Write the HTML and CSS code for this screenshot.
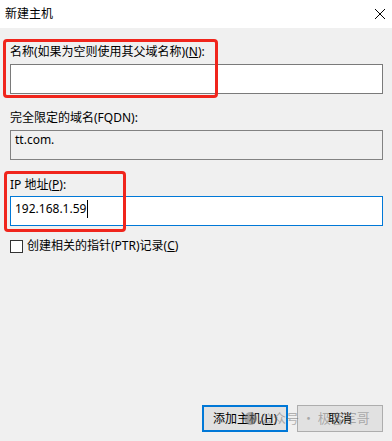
FILE: index.html
```html
<!DOCTYPE html>
<html lang="zh-CN">
	<head>
		<meta charset="UTF-8">
		<title>新建主机</title>
		<link rel="stylesheet" href="styles.css">
	</head>
	<body>

		<div class="titlebar">
			<span class="title">新建主机</span>
			<svg class="close" width="12" height="12" viewBox="0 0 12 12">
				<path d="M1 1 L11 11 M11 1 L1 11" stroke="#000" stroke-width="1" fill="none"/>
			</svg>
		</div>

		<div class="dialog">
			<label class="field-label first">名称(如果为空则使用其父域名称)(<u>N</u>):</label>
			<div class="textbox"></div>

			<label class="field-label fqdn">完全限定的域名(FQDN):</label>
			<div class="textbox readonly">tt.com.</div>

			<label class="field-label ip">IP 地址(<u>P</u>):</label>
			<div class="textbox focused">192.168.1.59<span class="caret"></span></div>

			<label class="check-row">
				<span class="checkbox"></span>
				<span>创建相关的指针(PTR)记录(<u>C</u>)</span>
			</label>

			<div class="buttons">
				<button class="btn default">添加主机(<u>H</u>)</button>
				<button class="btn">取消</button>
			</div>

			<!-- annotations drawn over the dialog -->
			<div class="mark mark-name"></div>
			<div class="mark mark-ip"></div>
			<div class="watermark"><span class="wm-logo"></span>公众号 · 极客军哥</div>
		</div>

	</body>
</html>
```

FILE: styles.css
```css
html,
body {
	margin: 0;
	padding: 0;
}
body {
	width: 392px;
	height: 441px;
	display: flex;
	flex-direction: column;
	font-family: "Noto Sans", "Noto Sans CJK SC", sans-serif;
	font-size: 12px;
	color: #000;
	background: #f0f0f0;
}

.titlebar {
	height: 28px;
	flex: none;
	display: flex;
	align-items: center;
	justify-content: space-between;
	padding: 0 6px 0 5px;
	background: #fff;
}
.title {
	line-height: 16px;
}
.close {
	display: block;
}

.dialog {
	flex: 1;
	position: relative;
	display: flex;
	flex-direction: column;
	padding: 0 9px 9px 10px;
}

.field-label {
	display: block;
	line-height: 16px;
}
.field-label.first {
	margin-top: 16px;
	margin-bottom: 4px;
}
.field-label.fqdn {
	margin-top: 16px;
	margin-bottom: 4px;
}
.field-label.ip {
	margin-top: 17px;
	margin-bottom: 3px;
}

.textbox {
	box-sizing: border-box;
	height: 30px;
	border: 1px solid #7a7a7a;
	background: #fff;
	padding: 2px 4px 0;
	line-height: 16px;
	white-space: nowrap;
}
.textbox.readonly {
	background: #f0f0f0;
	border-color: #828282;
	padding-top: 1px;
}
.textbox.focused {
	border-color: #0078d7;
	padding-top: 3px;
}
.caret {
	display: inline-block;
	width: 1px;
	height: 18px;
	margin-left: 1px;
	background: #000;
	vertical-align: -5px;
}

.check-row {
	display: flex;
	align-items: center;
	gap: 4px;
	margin-top: 12px;
	line-height: 16px;
}
.checkbox {
	box-sizing: border-box;
	width: 13px;
	height: 13px;
	border: 1px solid #333;
	background: #fff;
}

.buttons {
	margin-top: auto;
	display: flex;
	justify-content: flex-end;
	gap: 9px;
}
.btn {
	box-sizing: border-box;
	width: 86px;
	height: 27px;
	padding: 0;
	font: inherit;
	line-height: 16px;
	color: #000;
	background: #e1e1e1;
	border: 1px solid #adadad;
}
.btn.default {
	border: 2px solid #0078d7;
}

.mark {
	position: absolute;
	border: 3px solid #f0251c;
	border-radius: 4px;
}
.mark-name {
	left: 3px;
	top: 11px;
	width: 209px;
	height: 53px;
}
.mark-ip {
	left: 4px;
	top: 143px;
	width: 116px;
	height: 55px;
}

.watermark {
	position: absolute;
	left: 244px;
	top: 381px;
	display: flex;
	align-items: center;
	gap: 3px;
	font-family: "Noto Sans CJK SC", sans-serif;
	font-size: 13px;
	line-height: 18px;
	color: rgba(110, 110, 110, 0.5);
	white-space: nowrap;
}
.wm-logo {
	width: 13px;
	height: 13px;
	border-radius: 50%;
	background: rgba(110, 110, 110, 0.55);
}
```
